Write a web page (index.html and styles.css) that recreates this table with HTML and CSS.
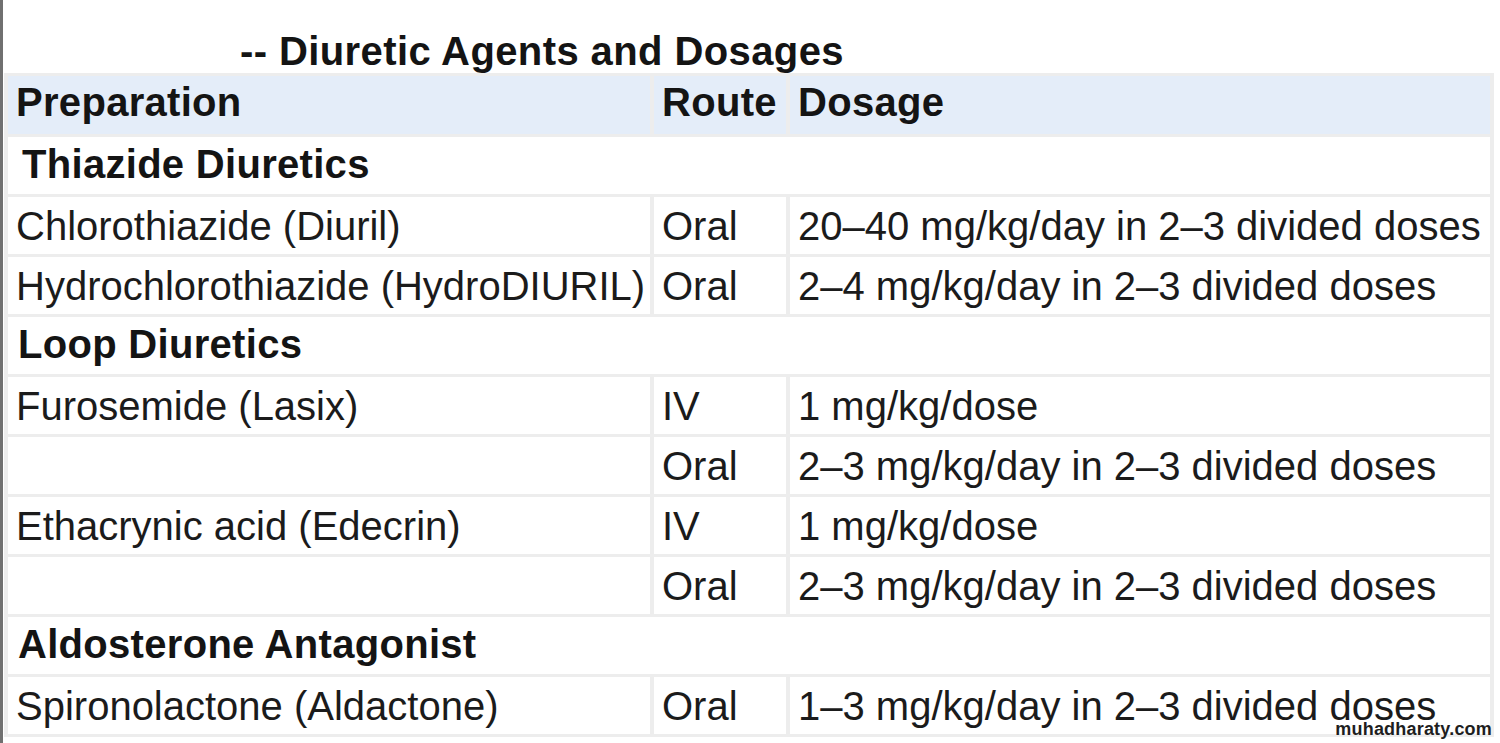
FILE: index.html
```html
<!DOCTYPE html>
<html>
<head>
<meta charset="utf-8">
<link rel="stylesheet" href="styles.css">
</head>
<body>
<div class="page">
  <h1 class="title">-- Diuretic Agents and Dosages</h1>
  <table class="dose-table">
    <colgroup>
      <col class="c-prep">
      <col class="c-route">
      <col class="c-dose">
    </colgroup>
    <thead>
      <tr class="head-row">
        <th>Preparation</th>
        <th>Route</th>
        <th>Dosage</th>
      </tr>
    </thead>
    <tbody>
      <tr class="group-row"><td colspan="3" class="group-first">Thiazide Diuretics</td></tr>
      <tr><td>Chlorothiazide (Diuril)</td><td>Oral</td><td>20–40 mg/kg/day in 2–3 divided doses</td></tr>
      <tr><td>Hydrochlorothiazide (HydroDIURIL)</td><td>Oral</td><td>2–4 mg/kg/day in 2–3 divided doses</td></tr>
      <tr class="group-row"><td colspan="3">Loop Diuretics</td></tr>
      <tr><td>Furosemide (Lasix)</td><td>IV</td><td>1 mg/kg/dose</td></tr>
      <tr><td></td><td>Oral</td><td>2–3 mg/kg/day in 2–3 divided doses</td></tr>
      <tr><td>Ethacrynic acid (Edecrin)</td><td>IV</td><td>1 mg/kg/dose</td></tr>
      <tr><td></td><td>Oral</td><td>2–3 mg/kg/day in 2–3 divided doses</td></tr>
      <tr class="group-row"><td colspan="3">Aldosterone Antagonist</td></tr>
      <tr><td>Spironolactone (Aldactone)</td><td>Oral</td><td>1–3 mg/kg/day in 2–3 divided doses</td></tr>
    </tbody>
  </table>
  <div class="watermark">muhadharaty.com</div>
</div>
</body>
</html>
```
FILE: styles.css
```css
html, body {
  margin: 0;
  padding: 0;
  background: #ffffff;
}

.page {
  position: relative;
  height: 743px;
  overflow: hidden;
  border-left: 3px solid #707070;
  box-sizing: border-box;
  font-family: "Liberation Sans", Arial, sans-serif;
  color: #1b1b1b;
}

.title {
  margin: 0;
  padding: 30px 0 0 237px;
  height: 43px;
  line-height: 43px;
  font-size: 40px;
  font-weight: bold;
  letter-spacing: 0.4px;
  color: #141414;
  box-sizing: content-box;
}

.dose-table {
  margin-left: 1px;
  width: 1490px;
  table-layout: fixed;
  border-collapse: separate;
  border-spacing: 4px 3px;
  background: #ededed;
  font-size: 40px;
}

.c-prep { width: 642px; }
.c-route { width: 132px; }
.c-dose { width: 700px; }

.dose-table th,
.dose-table td {
  box-sizing: border-box;
  height: 57px;
  padding: 0 0 0 8px;
  text-align: left;
  vertical-align: middle;
  white-space: nowrap;
  background: #ffffff;
  line-height: 46px;
}

.head-row th {
  background: #e4edf9;
  font-weight: bold;
  letter-spacing: 0.3px;
  height: 58px;
  padding-bottom: 6px;
  color: #141414;
}

.group-row td {
  font-weight: bold;
  letter-spacing: 0.3px;
  color: #141414;
  padding-left: 10px;
  padding-bottom: 4px;
}

.group-row td.group-first {
  padding-left: 14px;
}

.watermark {
  position: absolute;
  right: 8px;
  bottom: 3px;
  font-family: "Liberation Sans", Arial, sans-serif;
  font-weight: bold;
  font-size: 18px;
  letter-spacing: 0.2px;
  color: #1e1e1e;
}
```
